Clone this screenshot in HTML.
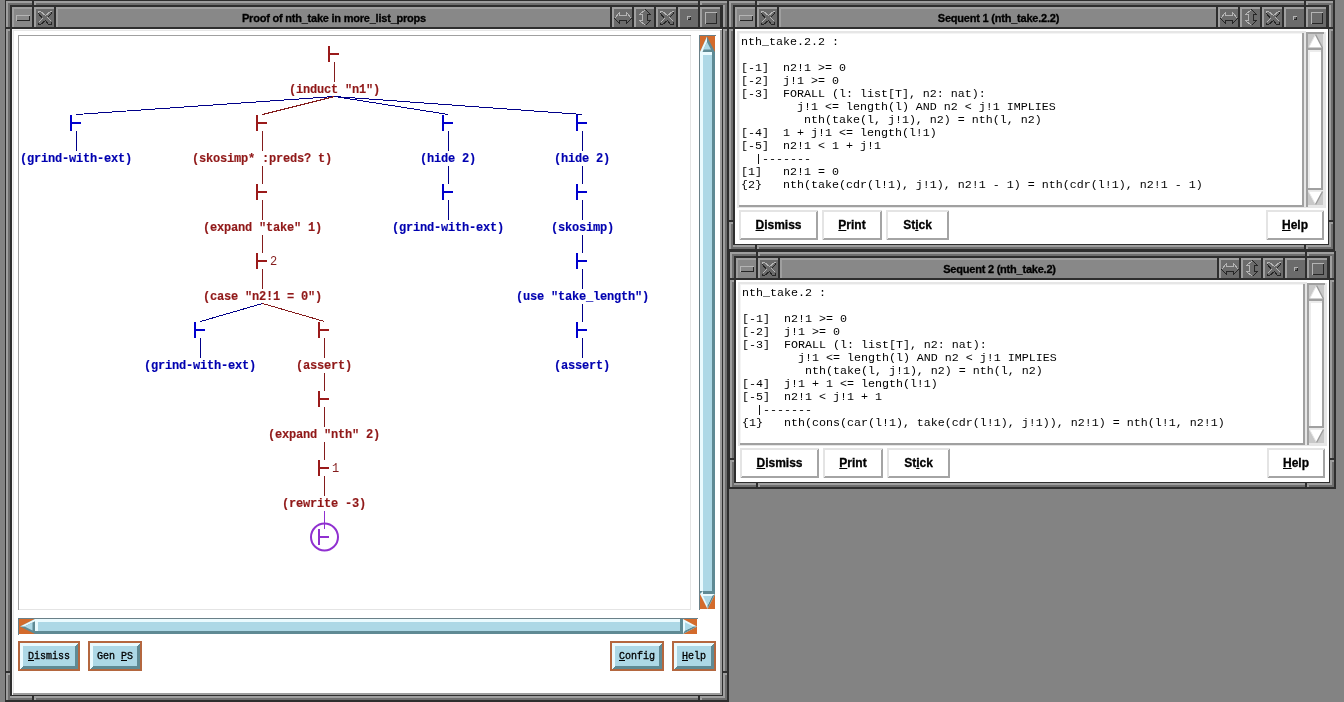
<!DOCTYPE html><html><head><meta charset="utf-8"><style>
*{margin:0;padding:0}
body{width:1344px;height:702px;overflow:hidden;position:relative;background:#838383;-webkit-font-smoothing:antialiased}
.ttl,.lbl,.seq,.lb,.rb,.rl{will-change:transform}
div{position:absolute}
.ttl{font-family:"Liberation Sans",sans-serif;font-weight:bold;font-size:11px;letter-spacing:-0.22px;line-height:20px;text-align:center;color:#000;-webkit-text-stroke:0.3px #000}
.lbl{font-family:"Liberation Mono",monospace;font-weight:bold;font-size:12px;letter-spacing:-0.2px;line-height:14px;white-space:pre;-webkit-text-stroke:0.15px}
.rl{position:absolute;font-family:"Liberation Mono",monospace;font-size:12px;line-height:12px}
.lb{font-family:"Liberation Mono",monospace;font-size:10px;line-height:16px;text-align:center;color:#000;-webkit-text-stroke:0.3px #000}
.rb{font-family:"Liberation Sans",sans-serif;font-weight:bold;font-size:12px;line-height:16px;text-align:center;color:#000;-webkit-text-stroke:0.3px #000}
.seq{font-family:"Liberation Mono",monospace;font-size:11.67px;line-height:13px;white-space:pre;color:#000;}
</style></head><body><div style="left:0px;top:0px;width:1344px;height:702px;background:#838383"></div><div style="left:5px;top:0px;width:724px;height:702px;background:#2e2e2e"></div><div style="left:6px;top:1px;width:721px;height:2px;background:#9f9f9f"></div><div style="left:6px;top:1px;width:2px;height:699px;background:#9f9f9f"></div><div style="left:723px;top:5px;width:2px;height:695px;background:#9f9f9f"></div><div style="left:10px;top:696px;width:717px;height:2px;background:#9f9f9f"></div><div style="left:8px;top:3px;width:719px;height:2px;background:#6e6e6e"></div><div style="left:8px;top:3px;width:2px;height:697px;background:#6e6e6e"></div><div style="left:725px;top:3px;width:2px;height:697px;background:#6e6e6e"></div><div style="left:8px;top:698px;width:719px;height:2px;background:#6e6e6e"></div><div style="left:33px;top:0px;width:1px;height:7px;background:#2e2e2e"></div><div style="left:32px;top:1px;width:1px;height:4px;background:#2e2e2e"></div><div style="left:34px;top:1px;width:2px;height:4px;background:#9f9f9f"></div><div style="left:33px;top:695px;width:1px;height:7px;background:#2e2e2e"></div><div style="left:32px;top:696px;width:1px;height:4px;background:#2e2e2e"></div><div style="left:34px;top:696px;width:2px;height:4px;background:#9f9f9f"></div><div style="left:699px;top:0px;width:1px;height:7px;background:#2e2e2e"></div><div style="left:698px;top:1px;width:1px;height:4px;background:#2e2e2e"></div><div style="left:700px;top:1px;width:2px;height:4px;background:#9f9f9f"></div><div style="left:699px;top:695px;width:1px;height:7px;background:#2e2e2e"></div><div style="left:698px;top:696px;width:1px;height:4px;background:#2e2e2e"></div><div style="left:700px;top:696px;width:2px;height:4px;background:#9f9f9f"></div><div style="left:5px;top:28px;width:7px;height:1px;background:#2e2e2e"></div><div style="left:6px;top:27px;width:4px;height:1px;background:#2e2e2e"></div><div style="left:6px;top:29px;width:4px;height:2px;background:#9f9f9f"></div><div style="left:722px;top:28px;width:7px;height:1px;background:#2e2e2e"></div><div style="left:723px;top:27px;width:4px;height:1px;background:#2e2e2e"></div><div style="left:723px;top:29px;width:4px;height:2px;background:#9f9f9f"></div><div style="left:5px;top:672px;width:7px;height:1px;background:#2e2e2e"></div><div style="left:6px;top:671px;width:4px;height:1px;background:#2e2e2e"></div><div style="left:6px;top:673px;width:4px;height:2px;background:#9f9f9f"></div><div style="left:722px;top:672px;width:7px;height:1px;background:#2e2e2e"></div><div style="left:723px;top:671px;width:4px;height:1px;background:#2e2e2e"></div><div style="left:723px;top:673px;width:4px;height:2px;background:#9f9f9f"></div><div style="left:12px;top:7px;width:22px;height:22px;background:#888888"></div><div style="left:12px;top:7px;width:22px;height:2px;background:#9f9f9f"></div><div style="left:12px;top:7px;width:2px;height:22px;background:#9f9f9f"></div><div style="left:32px;top:7px;width:2px;height:22px;background:#2e2e2e"></div><div style="left:12px;top:27px;width:22px;height:2px;background:#2e2e2e"></div><svg style="position:absolute;left:12px;top:7px;" width="22" height="22" viewBox="0 0 22 22"><g shape-rendering="crispEdges"><path d="M4.5 13.5L4.5 8.5L17.5 8.5" stroke="#b4b4b4" fill="none"/><path d="M4.5 13.5L17.5 13.5L17.5 8.5" stroke="#262626" fill="none"/></g></svg><div style="left:34px;top:7px;width:22px;height:22px;background:#6b6b6b"></div><div style="left:34px;top:7px;width:22px;height:2px;background:#9f9f9f"></div><div style="left:34px;top:7px;width:2px;height:22px;background:#9f9f9f"></div><div style="left:54px;top:7px;width:2px;height:22px;background:#2e2e2e"></div><div style="left:34px;top:27px;width:22px;height:2px;background:#2e2e2e"></div><svg style="position:absolute;left:34px;top:7px;" width="22" height="22" viewBox="0 0 22 22"><g shape-rendering="crispEdges"><path d="M4.5 6.5L4.5 4.5L6.5 4.5L11.5 8.5L16.5 4.5L17.5 4.5" stroke="#b4b4b4" fill="none"/><path d="M13.5 10.5L17.5 14.5" stroke="#b4b4b4" fill="none"/><path d="M4.5 15.5L8.5 11.5" stroke="#b4b4b4" fill="none"/><path d="M17.5 4.5L17.5 6.5L13.5 10.5" stroke="#262626" fill="none"/><path d="M17.5 14.5L17.5 17.5L14.5 17.5L11.5 13.5L6.5 17.5L4.5 17.5L4.5 15.5" stroke="#262626" fill="none"/><path d="M8.5 11.5L4.5 6.5" stroke="#262626" fill="none"/></g></svg><div style="left:56px;top:7px;width:556px;height:22px;background:#888888"></div><div style="left:56px;top:7px;width:556px;height:2px;background:#9f9f9f"></div><div style="left:56px;top:7px;width:2px;height:22px;background:#9f9f9f"></div><div style="left:610px;top:7px;width:2px;height:22px;background:#2e2e2e"></div><div style="left:56px;top:27px;width:556px;height:2px;background:#2e2e2e"></div><div class="ttl" style="left:56px;top:8px;width:556px">Proof of nth_take in more_list_props</div><div style="left:612px;top:7px;width:22px;height:22px;background:#6b6b6b"></div><div style="left:612px;top:7px;width:22px;height:2px;background:#9f9f9f"></div><div style="left:612px;top:7px;width:2px;height:22px;background:#9f9f9f"></div><div style="left:632px;top:7px;width:2px;height:22px;background:#2e2e2e"></div><div style="left:612px;top:27px;width:22px;height:2px;background:#2e2e2e"></div><svg style="position:absolute;left:612px;top:7px;" width="22" height="22" viewBox="0 0 22 22"><g shape-rendering="crispEdges"><path d="M2.5 11.5L7.5 5.5L7.5 8.5L14.5 8.5L14.5 5.5L19.5 11.5" stroke="#b4b4b4" fill="none"/><path d="M19.5 11.5L14.5 16.5L14.5 13.5L7.5 13.5L7.5 16.5L2.5 11.5" stroke="#262626" fill="none"/></g></svg><div style="left:634px;top:7px;width:22px;height:22px;background:#6b6b6b"></div><div style="left:634px;top:7px;width:22px;height:2px;background:#9f9f9f"></div><div style="left:634px;top:7px;width:2px;height:22px;background:#9f9f9f"></div><div style="left:654px;top:7px;width:2px;height:22px;background:#2e2e2e"></div><div style="left:634px;top:27px;width:22px;height:2px;background:#2e2e2e"></div><svg style="position:absolute;left:634px;top:7px;" width="22" height="22" viewBox="0 0 22 22"><g shape-rendering="crispEdges"><path d="M11.5 2.5L5.5 7.5L8.5 7.5L8.5 13.5L5.5 13.5L11.5 18.5" stroke="#b4b4b4" fill="none"/><path d="M11.5 18.5L16.5 13.5L13.5 13.5L13.5 7.5L16.5 7.5L11.5 2.5" stroke="#262626" fill="none"/></g></svg><div style="left:656px;top:7px;width:22px;height:22px;background:#6b6b6b"></div><div style="left:656px;top:7px;width:22px;height:2px;background:#9f9f9f"></div><div style="left:656px;top:7px;width:2px;height:22px;background:#9f9f9f"></div><div style="left:676px;top:7px;width:2px;height:22px;background:#2e2e2e"></div><div style="left:656px;top:27px;width:22px;height:2px;background:#2e2e2e"></div><svg style="position:absolute;left:656px;top:7px;" width="22" height="22" viewBox="0 0 22 22"><g shape-rendering="crispEdges"><path d="M4.5 6.5L4.5 4.5L6.5 4.5L11.5 8.5L16.5 4.5L17.5 4.5" stroke="#b4b4b4" fill="none"/><path d="M13.5 10.5L17.5 14.5" stroke="#b4b4b4" fill="none"/><path d="M4.5 15.5L8.5 11.5" stroke="#b4b4b4" fill="none"/><path d="M17.5 4.5L17.5 6.5L13.5 10.5" stroke="#262626" fill="none"/><path d="M17.5 14.5L17.5 17.5L14.5 17.5L11.5 13.5L6.5 17.5L4.5 17.5L4.5 15.5" stroke="#262626" fill="none"/><path d="M8.5 11.5L4.5 6.5" stroke="#262626" fill="none"/></g></svg><div style="left:678px;top:7px;width:22px;height:22px;background:#6b6b6b"></div><div style="left:678px;top:7px;width:22px;height:2px;background:#9f9f9f"></div><div style="left:678px;top:7px;width:2px;height:22px;background:#9f9f9f"></div><div style="left:698px;top:7px;width:2px;height:22px;background:#2e2e2e"></div><div style="left:678px;top:27px;width:22px;height:2px;background:#2e2e2e"></div><svg style="position:absolute;left:678px;top:7px;" width="22" height="22" viewBox="0 0 22 22"><g shape-rendering="crispEdges"><path d="M9.5 12.5L9.5 9.5L12.5 9.5" stroke="#b4b4b4" fill="none"/><path d="M9.5 12.5L12.5 12.5L12.5 9.5" stroke="#262626" fill="none"/></g></svg><div style="left:700px;top:7px;width:22px;height:22px;background:#6b6b6b"></div><div style="left:700px;top:7px;width:22px;height:2px;background:#9f9f9f"></div><div style="left:700px;top:7px;width:2px;height:22px;background:#9f9f9f"></div><div style="left:720px;top:7px;width:2px;height:22px;background:#2e2e2e"></div><div style="left:700px;top:27px;width:22px;height:2px;background:#2e2e2e"></div><svg style="position:absolute;left:700px;top:7px;" width="22" height="22" viewBox="0 0 22 22"><g shape-rendering="crispEdges"><path d="M5.5 16.5L5.5 5.5L16.5 5.5" stroke="#b4b4b4" fill="none"/><path d="M5.5 16.5L16.5 16.5L16.5 5.5" stroke="#262626" fill="none"/></g></svg><div style="left:12px;top:29px;width:710px;height:666px;background:#ffffff"></div><div style="left:12px;top:29px;width:710px;height:2px;background:#e6e6e6"></div><div style="left:12px;top:29px;width:2px;height:666px;background:#e6e6e6"></div><div style="left:12px;top:29px;width:710px;height:1px;background:#f6f6f6"></div><div style="left:12px;top:29px;width:1px;height:666px;background:#f6f6f6"></div><div style="left:720px;top:30px;width:2px;height:665px;background:#9c9c9c"></div><div style="left:13px;top:693px;width:709px;height:2px;background:#9c9c9c"></div><div style="left:18px;top:35px;width:673px;height:575px;background:#a0a0a0"></div><div style="left:19px;top:36px;width:672px;height:574px;background:#e4e4e4"></div><div style="left:19px;top:36px;width:671px;height:573px;background:#ffffff"></div><div style="left:728px;top:0px;width:607px;height:251px;background:#2e2e2e"></div><div style="left:729px;top:1px;width:604px;height:2px;background:#9f9f9f"></div><div style="left:729px;top:1px;width:2px;height:248px;background:#9f9f9f"></div><div style="left:1329px;top:5px;width:2px;height:244px;background:#9f9f9f"></div><div style="left:733px;top:245px;width:600px;height:2px;background:#9f9f9f"></div><div style="left:731px;top:3px;width:602px;height:2px;background:#6e6e6e"></div><div style="left:731px;top:3px;width:2px;height:246px;background:#6e6e6e"></div><div style="left:1331px;top:3px;width:2px;height:246px;background:#6e6e6e"></div><div style="left:731px;top:247px;width:602px;height:2px;background:#6e6e6e"></div><div style="left:756px;top:0px;width:1px;height:7px;background:#2e2e2e"></div><div style="left:755px;top:1px;width:1px;height:4px;background:#2e2e2e"></div><div style="left:757px;top:1px;width:2px;height:4px;background:#9f9f9f"></div><div style="left:756px;top:244px;width:1px;height:7px;background:#2e2e2e"></div><div style="left:755px;top:245px;width:1px;height:4px;background:#2e2e2e"></div><div style="left:757px;top:245px;width:2px;height:4px;background:#9f9f9f"></div><div style="left:1305px;top:0px;width:1px;height:7px;background:#2e2e2e"></div><div style="left:1304px;top:1px;width:1px;height:4px;background:#2e2e2e"></div><div style="left:1306px;top:1px;width:2px;height:4px;background:#9f9f9f"></div><div style="left:1305px;top:244px;width:1px;height:7px;background:#2e2e2e"></div><div style="left:1304px;top:245px;width:1px;height:4px;background:#2e2e2e"></div><div style="left:1306px;top:245px;width:2px;height:4px;background:#9f9f9f"></div><div style="left:728px;top:28px;width:7px;height:1px;background:#2e2e2e"></div><div style="left:729px;top:27px;width:4px;height:1px;background:#2e2e2e"></div><div style="left:729px;top:29px;width:4px;height:2px;background:#9f9f9f"></div><div style="left:1328px;top:28px;width:7px;height:1px;background:#2e2e2e"></div><div style="left:1329px;top:27px;width:4px;height:1px;background:#2e2e2e"></div><div style="left:1329px;top:29px;width:4px;height:2px;background:#9f9f9f"></div><div style="left:728px;top:221px;width:7px;height:1px;background:#2e2e2e"></div><div style="left:729px;top:220px;width:4px;height:1px;background:#2e2e2e"></div><div style="left:729px;top:222px;width:4px;height:2px;background:#9f9f9f"></div><div style="left:1328px;top:221px;width:7px;height:1px;background:#2e2e2e"></div><div style="left:1329px;top:220px;width:4px;height:1px;background:#2e2e2e"></div><div style="left:1329px;top:222px;width:4px;height:2px;background:#9f9f9f"></div><div style="left:735px;top:7px;width:22px;height:22px;background:#888888"></div><div style="left:735px;top:7px;width:22px;height:2px;background:#9f9f9f"></div><div style="left:735px;top:7px;width:2px;height:22px;background:#9f9f9f"></div><div style="left:755px;top:7px;width:2px;height:22px;background:#2e2e2e"></div><div style="left:735px;top:27px;width:22px;height:2px;background:#2e2e2e"></div><svg style="position:absolute;left:735px;top:7px;" width="22" height="22" viewBox="0 0 22 22"><g shape-rendering="crispEdges"><path d="M4.5 13.5L4.5 8.5L17.5 8.5" stroke="#b4b4b4" fill="none"/><path d="M4.5 13.5L17.5 13.5L17.5 8.5" stroke="#262626" fill="none"/></g></svg><div style="left:757px;top:7px;width:22px;height:22px;background:#6b6b6b"></div><div style="left:757px;top:7px;width:22px;height:2px;background:#9f9f9f"></div><div style="left:757px;top:7px;width:2px;height:22px;background:#9f9f9f"></div><div style="left:777px;top:7px;width:2px;height:22px;background:#2e2e2e"></div><div style="left:757px;top:27px;width:22px;height:2px;background:#2e2e2e"></div><svg style="position:absolute;left:757px;top:7px;" width="22" height="22" viewBox="0 0 22 22"><g shape-rendering="crispEdges"><path d="M4.5 6.5L4.5 4.5L6.5 4.5L11.5 8.5L16.5 4.5L17.5 4.5" stroke="#b4b4b4" fill="none"/><path d="M13.5 10.5L17.5 14.5" stroke="#b4b4b4" fill="none"/><path d="M4.5 15.5L8.5 11.5" stroke="#b4b4b4" fill="none"/><path d="M17.5 4.5L17.5 6.5L13.5 10.5" stroke="#262626" fill="none"/><path d="M17.5 14.5L17.5 17.5L14.5 17.5L11.5 13.5L6.5 17.5L4.5 17.5L4.5 15.5" stroke="#262626" fill="none"/><path d="M8.5 11.5L4.5 6.5" stroke="#262626" fill="none"/></g></svg><div style="left:779px;top:7px;width:439px;height:22px;background:#888888"></div><div style="left:779px;top:7px;width:439px;height:2px;background:#9f9f9f"></div><div style="left:779px;top:7px;width:2px;height:22px;background:#9f9f9f"></div><div style="left:1216px;top:7px;width:2px;height:22px;background:#2e2e2e"></div><div style="left:779px;top:27px;width:439px;height:2px;background:#2e2e2e"></div><div class="ttl" style="left:779px;top:8px;width:439px">Sequent 1 (nth_take.2.2)</div><div style="left:1218px;top:7px;width:22px;height:22px;background:#6b6b6b"></div><div style="left:1218px;top:7px;width:22px;height:2px;background:#9f9f9f"></div><div style="left:1218px;top:7px;width:2px;height:22px;background:#9f9f9f"></div><div style="left:1238px;top:7px;width:2px;height:22px;background:#2e2e2e"></div><div style="left:1218px;top:27px;width:22px;height:2px;background:#2e2e2e"></div><svg style="position:absolute;left:1218px;top:7px;" width="22" height="22" viewBox="0 0 22 22"><g shape-rendering="crispEdges"><path d="M2.5 11.5L7.5 5.5L7.5 8.5L14.5 8.5L14.5 5.5L19.5 11.5" stroke="#b4b4b4" fill="none"/><path d="M19.5 11.5L14.5 16.5L14.5 13.5L7.5 13.5L7.5 16.5L2.5 11.5" stroke="#262626" fill="none"/></g></svg><div style="left:1240px;top:7px;width:22px;height:22px;background:#6b6b6b"></div><div style="left:1240px;top:7px;width:22px;height:2px;background:#9f9f9f"></div><div style="left:1240px;top:7px;width:2px;height:22px;background:#9f9f9f"></div><div style="left:1260px;top:7px;width:2px;height:22px;background:#2e2e2e"></div><div style="left:1240px;top:27px;width:22px;height:2px;background:#2e2e2e"></div><svg style="position:absolute;left:1240px;top:7px;" width="22" height="22" viewBox="0 0 22 22"><g shape-rendering="crispEdges"><path d="M11.5 2.5L5.5 7.5L8.5 7.5L8.5 13.5L5.5 13.5L11.5 18.5" stroke="#b4b4b4" fill="none"/><path d="M11.5 18.5L16.5 13.5L13.5 13.5L13.5 7.5L16.5 7.5L11.5 2.5" stroke="#262626" fill="none"/></g></svg><div style="left:1262px;top:7px;width:22px;height:22px;background:#6b6b6b"></div><div style="left:1262px;top:7px;width:22px;height:2px;background:#9f9f9f"></div><div style="left:1262px;top:7px;width:2px;height:22px;background:#9f9f9f"></div><div style="left:1282px;top:7px;width:2px;height:22px;background:#2e2e2e"></div><div style="left:1262px;top:27px;width:22px;height:2px;background:#2e2e2e"></div><svg style="position:absolute;left:1262px;top:7px;" width="22" height="22" viewBox="0 0 22 22"><g shape-rendering="crispEdges"><path d="M4.5 6.5L4.5 4.5L6.5 4.5L11.5 8.5L16.5 4.5L17.5 4.5" stroke="#b4b4b4" fill="none"/><path d="M13.5 10.5L17.5 14.5" stroke="#b4b4b4" fill="none"/><path d="M4.5 15.5L8.5 11.5" stroke="#b4b4b4" fill="none"/><path d="M17.5 4.5L17.5 6.5L13.5 10.5" stroke="#262626" fill="none"/><path d="M17.5 14.5L17.5 17.5L14.5 17.5L11.5 13.5L6.5 17.5L4.5 17.5L4.5 15.5" stroke="#262626" fill="none"/><path d="M8.5 11.5L4.5 6.5" stroke="#262626" fill="none"/></g></svg><div style="left:1284px;top:7px;width:22px;height:22px;background:#6b6b6b"></div><div style="left:1284px;top:7px;width:22px;height:2px;background:#9f9f9f"></div><div style="left:1284px;top:7px;width:2px;height:22px;background:#9f9f9f"></div><div style="left:1304px;top:7px;width:2px;height:22px;background:#2e2e2e"></div><div style="left:1284px;top:27px;width:22px;height:2px;background:#2e2e2e"></div><svg style="position:absolute;left:1284px;top:7px;" width="22" height="22" viewBox="0 0 22 22"><g shape-rendering="crispEdges"><path d="M9.5 12.5L9.5 9.5L12.5 9.5" stroke="#b4b4b4" fill="none"/><path d="M9.5 12.5L12.5 12.5L12.5 9.5" stroke="#262626" fill="none"/></g></svg><div style="left:1306px;top:7px;width:22px;height:22px;background:#6b6b6b"></div><div style="left:1306px;top:7px;width:22px;height:2px;background:#9f9f9f"></div><div style="left:1306px;top:7px;width:2px;height:22px;background:#9f9f9f"></div><div style="left:1326px;top:7px;width:2px;height:22px;background:#2e2e2e"></div><div style="left:1306px;top:27px;width:22px;height:2px;background:#2e2e2e"></div><svg style="position:absolute;left:1306px;top:7px;" width="22" height="22" viewBox="0 0 22 22"><g shape-rendering="crispEdges"><path d="M5.5 16.5L5.5 5.5L16.5 5.5" stroke="#b4b4b4" fill="none"/><path d="M5.5 16.5L16.5 16.5L16.5 5.5" stroke="#262626" fill="none"/></g></svg><div style="left:735px;top:29px;width:593px;height:215px;background:#ffffff"></div><div style="left:728px;top:251px;width:1px;height:238px;background:#2e2e2e"></div><div style="left:729px;top:251px;width:607px;height:238px;background:#2e2e2e"></div><div style="left:730px;top:252px;width:604px;height:2px;background:#9f9f9f"></div><div style="left:730px;top:252px;width:2px;height:235px;background:#9f9f9f"></div><div style="left:1330px;top:256px;width:2px;height:231px;background:#9f9f9f"></div><div style="left:734px;top:483px;width:600px;height:2px;background:#9f9f9f"></div><div style="left:732px;top:254px;width:602px;height:2px;background:#6e6e6e"></div><div style="left:732px;top:254px;width:2px;height:233px;background:#6e6e6e"></div><div style="left:1332px;top:254px;width:2px;height:233px;background:#6e6e6e"></div><div style="left:732px;top:485px;width:602px;height:2px;background:#6e6e6e"></div><div style="left:757px;top:251px;width:1px;height:7px;background:#2e2e2e"></div><div style="left:756px;top:252px;width:1px;height:4px;background:#2e2e2e"></div><div style="left:758px;top:252px;width:2px;height:4px;background:#9f9f9f"></div><div style="left:757px;top:482px;width:1px;height:7px;background:#2e2e2e"></div><div style="left:756px;top:483px;width:1px;height:4px;background:#2e2e2e"></div><div style="left:758px;top:483px;width:2px;height:4px;background:#9f9f9f"></div><div style="left:1306px;top:251px;width:1px;height:7px;background:#2e2e2e"></div><div style="left:1305px;top:252px;width:1px;height:4px;background:#2e2e2e"></div><div style="left:1307px;top:252px;width:2px;height:4px;background:#9f9f9f"></div><div style="left:1306px;top:482px;width:1px;height:7px;background:#2e2e2e"></div><div style="left:1305px;top:483px;width:1px;height:4px;background:#2e2e2e"></div><div style="left:1307px;top:483px;width:2px;height:4px;background:#9f9f9f"></div><div style="left:729px;top:279px;width:7px;height:1px;background:#2e2e2e"></div><div style="left:730px;top:278px;width:4px;height:1px;background:#2e2e2e"></div><div style="left:730px;top:280px;width:4px;height:2px;background:#9f9f9f"></div><div style="left:1329px;top:279px;width:7px;height:1px;background:#2e2e2e"></div><div style="left:1330px;top:278px;width:4px;height:1px;background:#2e2e2e"></div><div style="left:1330px;top:280px;width:4px;height:2px;background:#9f9f9f"></div><div style="left:729px;top:459px;width:7px;height:1px;background:#2e2e2e"></div><div style="left:730px;top:458px;width:4px;height:1px;background:#2e2e2e"></div><div style="left:730px;top:460px;width:4px;height:2px;background:#9f9f9f"></div><div style="left:1329px;top:459px;width:7px;height:1px;background:#2e2e2e"></div><div style="left:1330px;top:458px;width:4px;height:1px;background:#2e2e2e"></div><div style="left:1330px;top:460px;width:4px;height:2px;background:#9f9f9f"></div><div style="left:736px;top:258px;width:22px;height:22px;background:#888888"></div><div style="left:736px;top:258px;width:22px;height:2px;background:#9f9f9f"></div><div style="left:736px;top:258px;width:2px;height:22px;background:#9f9f9f"></div><div style="left:756px;top:258px;width:2px;height:22px;background:#2e2e2e"></div><div style="left:736px;top:278px;width:22px;height:2px;background:#2e2e2e"></div><svg style="position:absolute;left:736px;top:258px;" width="22" height="22" viewBox="0 0 22 22"><g shape-rendering="crispEdges"><path d="M4.5 13.5L4.5 8.5L17.5 8.5" stroke="#b4b4b4" fill="none"/><path d="M4.5 13.5L17.5 13.5L17.5 8.5" stroke="#262626" fill="none"/></g></svg><div style="left:758px;top:258px;width:22px;height:22px;background:#6b6b6b"></div><div style="left:758px;top:258px;width:22px;height:2px;background:#9f9f9f"></div><div style="left:758px;top:258px;width:2px;height:22px;background:#9f9f9f"></div><div style="left:778px;top:258px;width:2px;height:22px;background:#2e2e2e"></div><div style="left:758px;top:278px;width:22px;height:2px;background:#2e2e2e"></div><svg style="position:absolute;left:758px;top:258px;" width="22" height="22" viewBox="0 0 22 22"><g shape-rendering="crispEdges"><path d="M4.5 6.5L4.5 4.5L6.5 4.5L11.5 8.5L16.5 4.5L17.5 4.5" stroke="#b4b4b4" fill="none"/><path d="M13.5 10.5L17.5 14.5" stroke="#b4b4b4" fill="none"/><path d="M4.5 15.5L8.5 11.5" stroke="#b4b4b4" fill="none"/><path d="M17.5 4.5L17.5 6.5L13.5 10.5" stroke="#262626" fill="none"/><path d="M17.5 14.5L17.5 17.5L14.5 17.5L11.5 13.5L6.5 17.5L4.5 17.5L4.5 15.5" stroke="#262626" fill="none"/><path d="M8.5 11.5L4.5 6.5" stroke="#262626" fill="none"/></g></svg><div style="left:780px;top:258px;width:439px;height:22px;background:#888888"></div><div style="left:780px;top:258px;width:439px;height:2px;background:#9f9f9f"></div><div style="left:780px;top:258px;width:2px;height:22px;background:#9f9f9f"></div><div style="left:1217px;top:258px;width:2px;height:22px;background:#2e2e2e"></div><div style="left:780px;top:278px;width:439px;height:2px;background:#2e2e2e"></div><div class="ttl" style="left:780px;top:259px;width:439px">Sequent 2 (nth_take.2)</div><div style="left:1219px;top:258px;width:22px;height:22px;background:#6b6b6b"></div><div style="left:1219px;top:258px;width:22px;height:2px;background:#9f9f9f"></div><div style="left:1219px;top:258px;width:2px;height:22px;background:#9f9f9f"></div><div style="left:1239px;top:258px;width:2px;height:22px;background:#2e2e2e"></div><div style="left:1219px;top:278px;width:22px;height:2px;background:#2e2e2e"></div><svg style="position:absolute;left:1219px;top:258px;" width="22" height="22" viewBox="0 0 22 22"><g shape-rendering="crispEdges"><path d="M2.5 11.5L7.5 5.5L7.5 8.5L14.5 8.5L14.5 5.5L19.5 11.5" stroke="#b4b4b4" fill="none"/><path d="M19.5 11.5L14.5 16.5L14.5 13.5L7.5 13.5L7.5 16.5L2.5 11.5" stroke="#262626" fill="none"/></g></svg><div style="left:1241px;top:258px;width:22px;height:22px;background:#6b6b6b"></div><div style="left:1241px;top:258px;width:22px;height:2px;background:#9f9f9f"></div><div style="left:1241px;top:258px;width:2px;height:22px;background:#9f9f9f"></div><div style="left:1261px;top:258px;width:2px;height:22px;background:#2e2e2e"></div><div style="left:1241px;top:278px;width:22px;height:2px;background:#2e2e2e"></div><svg style="position:absolute;left:1241px;top:258px;" width="22" height="22" viewBox="0 0 22 22"><g shape-rendering="crispEdges"><path d="M11.5 2.5L5.5 7.5L8.5 7.5L8.5 13.5L5.5 13.5L11.5 18.5" stroke="#b4b4b4" fill="none"/><path d="M11.5 18.5L16.5 13.5L13.5 13.5L13.5 7.5L16.5 7.5L11.5 2.5" stroke="#262626" fill="none"/></g></svg><div style="left:1263px;top:258px;width:22px;height:22px;background:#6b6b6b"></div><div style="left:1263px;top:258px;width:22px;height:2px;background:#9f9f9f"></div><div style="left:1263px;top:258px;width:2px;height:22px;background:#9f9f9f"></div><div style="left:1283px;top:258px;width:2px;height:22px;background:#2e2e2e"></div><div style="left:1263px;top:278px;width:22px;height:2px;background:#2e2e2e"></div><svg style="position:absolute;left:1263px;top:258px;" width="22" height="22" viewBox="0 0 22 22"><g shape-rendering="crispEdges"><path d="M4.5 6.5L4.5 4.5L6.5 4.5L11.5 8.5L16.5 4.5L17.5 4.5" stroke="#b4b4b4" fill="none"/><path d="M13.5 10.5L17.5 14.5" stroke="#b4b4b4" fill="none"/><path d="M4.5 15.5L8.5 11.5" stroke="#b4b4b4" fill="none"/><path d="M17.5 4.5L17.5 6.5L13.5 10.5" stroke="#262626" fill="none"/><path d="M17.5 14.5L17.5 17.5L14.5 17.5L11.5 13.5L6.5 17.5L4.5 17.5L4.5 15.5" stroke="#262626" fill="none"/><path d="M8.5 11.5L4.5 6.5" stroke="#262626" fill="none"/></g></svg><div style="left:1285px;top:258px;width:22px;height:22px;background:#6b6b6b"></div><div style="left:1285px;top:258px;width:22px;height:2px;background:#9f9f9f"></div><div style="left:1285px;top:258px;width:2px;height:22px;background:#9f9f9f"></div><div style="left:1305px;top:258px;width:2px;height:22px;background:#2e2e2e"></div><div style="left:1285px;top:278px;width:22px;height:2px;background:#2e2e2e"></div><svg style="position:absolute;left:1285px;top:258px;" width="22" height="22" viewBox="0 0 22 22"><g shape-rendering="crispEdges"><path d="M9.5 12.5L9.5 9.5L12.5 9.5" stroke="#b4b4b4" fill="none"/><path d="M9.5 12.5L12.5 12.5L12.5 9.5" stroke="#262626" fill="none"/></g></svg><div style="left:1307px;top:258px;width:22px;height:22px;background:#6b6b6b"></div><div style="left:1307px;top:258px;width:22px;height:2px;background:#9f9f9f"></div><div style="left:1307px;top:258px;width:2px;height:22px;background:#9f9f9f"></div><div style="left:1327px;top:258px;width:2px;height:22px;background:#2e2e2e"></div><div style="left:1307px;top:278px;width:22px;height:2px;background:#2e2e2e"></div><svg style="position:absolute;left:1307px;top:258px;" width="22" height="22" viewBox="0 0 22 22"><g shape-rendering="crispEdges"><path d="M5.5 16.5L5.5 5.5L16.5 5.5" stroke="#b4b4b4" fill="none"/><path d="M5.5 16.5L16.5 16.5L16.5 5.5" stroke="#262626" fill="none"/></g></svg><div style="left:736px;top:280px;width:593px;height:202px;background:#ffffff"></div><div style="left:328px;top:46px;width:2px;height:16px;background:#9a1a1a"></div><div style="left:330px;top:53px;width:9px;height:2px;background:#9a1a1a"></div><div style="left:334px;top:62px;width:1px;height:20px;background:#841c1c"></div><div class="lbl" style="left:289px;top:83px;color:#901818">(induct "n1")</div><div style="left:70px;top:115px;width:2px;height:16px;background:#0000cd"></div><div style="left:72px;top:122px;width:9px;height:2px;background:#0000cd"></div><div style="left:76px;top:131px;width:1px;height:20px;background:#000088"></div><div class="lbl" style="left:20px;top:152px;color:#0000b0">(grind-with-ext)</div><div style="left:256px;top:115px;width:2px;height:16px;background:#9a1a1a"></div><div style="left:258px;top:122px;width:9px;height:2px;background:#9a1a1a"></div><div style="left:262px;top:131px;width:1px;height:20px;background:#841c1c"></div><div class="lbl" style="left:192px;top:152px;color:#901818">(skosimp* :preds? t)</div><div style="left:442px;top:115px;width:2px;height:16px;background:#0000cd"></div><div style="left:444px;top:122px;width:9px;height:2px;background:#0000cd"></div><div style="left:448px;top:131px;width:1px;height:20px;background:#000088"></div><div class="lbl" style="left:420px;top:152px;color:#0000b0">(hide 2)</div><div style="left:576px;top:115px;width:2px;height:16px;background:#0000cd"></div><div style="left:578px;top:122px;width:9px;height:2px;background:#0000cd"></div><div style="left:582px;top:131px;width:1px;height:20px;background:#000088"></div><div class="lbl" style="left:554px;top:152px;color:#0000b0">(hide 2)</div><div style="left:256px;top:184px;width:2px;height:16px;background:#9a1a1a"></div><div style="left:258px;top:191px;width:9px;height:2px;background:#9a1a1a"></div><div style="left:262px;top:200px;width:1px;height:20px;background:#841c1c"></div><div class="lbl" style="left:203px;top:221px;color:#901818">(expand "take" 1)</div><div style="left:442px;top:184px;width:2px;height:16px;background:#0000cd"></div><div style="left:444px;top:191px;width:9px;height:2px;background:#0000cd"></div><div style="left:448px;top:200px;width:1px;height:20px;background:#000088"></div><div class="lbl" style="left:392px;top:221px;color:#0000b0">(grind-with-ext)</div><div style="left:576px;top:184px;width:2px;height:16px;background:#0000cd"></div><div style="left:578px;top:191px;width:9px;height:2px;background:#0000cd"></div><div style="left:582px;top:200px;width:1px;height:20px;background:#000088"></div><div class="lbl" style="left:551px;top:221px;color:#0000b0">(skosimp)</div><div style="left:256px;top:253px;width:2px;height:16px;background:#9a1a1a"></div><div style="left:258px;top:260px;width:9px;height:2px;background:#9a1a1a"></div><div class="rl" style="left:270px;top:256px;color:#841c1c">2</div><div style="left:262px;top:269px;width:1px;height:20px;background:#841c1c"></div><div class="lbl" style="left:203px;top:290px;color:#901818">(case "n2!1 = 0")</div><div style="left:576px;top:253px;width:2px;height:16px;background:#0000cd"></div><div style="left:578px;top:260px;width:9px;height:2px;background:#0000cd"></div><div style="left:582px;top:269px;width:1px;height:20px;background:#000088"></div><div class="lbl" style="left:516px;top:290px;color:#0000b0">(use "take_length")</div><div style="left:194px;top:322px;width:2px;height:16px;background:#0000cd"></div><div style="left:196px;top:329px;width:9px;height:2px;background:#0000cd"></div><div style="left:200px;top:338px;width:1px;height:20px;background:#000088"></div><div class="lbl" style="left:144px;top:359px;color:#0000b0">(grind-with-ext)</div><div style="left:318px;top:322px;width:2px;height:16px;background:#9a1a1a"></div><div style="left:320px;top:329px;width:9px;height:2px;background:#9a1a1a"></div><div style="left:324px;top:338px;width:1px;height:20px;background:#841c1c"></div><div class="lbl" style="left:296px;top:359px;color:#901818">(assert)</div><div style="left:576px;top:322px;width:2px;height:16px;background:#0000cd"></div><div style="left:578px;top:329px;width:9px;height:2px;background:#0000cd"></div><div style="left:582px;top:338px;width:1px;height:20px;background:#000088"></div><div class="lbl" style="left:554px;top:359px;color:#0000b0">(assert)</div><div style="left:318px;top:391px;width:2px;height:16px;background:#9a1a1a"></div><div style="left:320px;top:398px;width:9px;height:2px;background:#9a1a1a"></div><div style="left:324px;top:407px;width:1px;height:20px;background:#841c1c"></div><div class="lbl" style="left:268px;top:428px;color:#901818">(expand "nth" 2)</div><div style="left:318px;top:460px;width:2px;height:16px;background:#9a1a1a"></div><div style="left:320px;top:467px;width:9px;height:2px;background:#9a1a1a"></div><div class="rl" style="left:332px;top:463px;color:#841c1c">1</div><div style="left:324px;top:476px;width:1px;height:20px;background:#841c1c"></div><div class="lbl" style="left:282px;top:497px;color:#901818">(rewrite -3)</div><svg style="position:absolute;left:308px;top:521px" width="32" height="32"><circle cx="16.5" cy="16" r="13.5" stroke="#9030d0" stroke-width="2" fill="none"/></svg><div style="left:318px;top:529px;width:2px;height:16px;background:#9030d0"></div><div style="left:320px;top:536px;width:9px;height:2px;background:#9030d0"></div><svg style="position:absolute;left:0;top:0" width="720" height="620" shape-rendering="crispEdges"><line x1="334.5" y1="96.5" x2="76.5" y2="114.5" stroke="#000088" stroke-width="1"/><line x1="334.5" y1="96.5" x2="262.5" y2="114.5" stroke="#841c1c" stroke-width="1"/><line x1="334.5" y1="96.5" x2="448.5" y2="114.5" stroke="#000088" stroke-width="1"/><line x1="334.5" y1="96.5" x2="582.5" y2="114.5" stroke="#000088" stroke-width="1"/><line x1="262.5" y1="165.5" x2="262.5" y2="183.5" stroke="#841c1c" stroke-width="1"/><line x1="448.5" y1="165.5" x2="448.5" y2="183.5" stroke="#000088" stroke-width="1"/><line x1="582.5" y1="165.5" x2="582.5" y2="183.5" stroke="#000088" stroke-width="1"/><line x1="262.5" y1="234.5" x2="262.5" y2="252.5" stroke="#841c1c" stroke-width="1"/><line x1="582.5" y1="234.5" x2="582.5" y2="252.5" stroke="#000088" stroke-width="1"/><line x1="262.5" y1="303.5" x2="200.5" y2="321.5" stroke="#000088" stroke-width="1"/><line x1="262.5" y1="303.5" x2="324.5" y2="321.5" stroke="#841c1c" stroke-width="1"/><line x1="582.5" y1="303.5" x2="582.5" y2="321.5" stroke="#000088" stroke-width="1"/><line x1="324.5" y1="372.5" x2="324.5" y2="390.5" stroke="#841c1c" stroke-width="1"/><line x1="324.5" y1="441.5" x2="324.5" y2="459.5" stroke="#841c1c" stroke-width="1"/><line x1="324.5" y1="510.5" x2="324.5" y2="528.5" stroke="#9030d0" stroke-width="1"/></svg><div style="left:699px;top:35px;width:17px;height:1px;background:#6a8088"></div><div style="left:699px;top:35px;width:1px;height:575px;background:#6a8088"></div><div style="left:700px;top:36px;width:15px;height:573px;background:#add8e6"></div><svg style="position:absolute;left:700px;top:36px;" width="15" height="16" viewBox="0 0 15 16"><rect width="15" height="16" fill="#d36b2c"/><path d="M7 0.5L15 16H0Z" fill="#5f8a94"/><path d="M7 0.5L0 16H2.5L7 6Z" fill="#eafafe"/><path d="M7 6L11 13.5H3.2Z" fill="#add8e6"/></svg><div style="left:700px;top:52px;width:15px;height:542px;background:#5f8a94"></div><div style="left:700px;top:52px;width:12px;height:539px;background:#eafafe"></div><div style="left:703px;top:55px;width:9px;height:536px;background:#add8e6"></div><svg style="position:absolute;left:700px;top:591px;" width="15" height="3" viewBox="0 0 15 3"><path d="M0 3L3 0V3Z" fill="#eafafe"/></svg><svg style="position:absolute;left:712px;top:52px;" width="3" height="3" viewBox="0 0 3 3"><path d="M3 0L0 3H3Z" fill="#5f8a94"/></svg><svg style="position:absolute;left:700px;top:594px;" width="15" height="15" viewBox="0 0 15 15"><rect width="15" height="15" fill="#d36b2c"/><path d="M0 0H15L7.5 15Z" fill="#eafafe"/><path d="M15 0L7.5 15L7.5 11.5L12.2 2Z" fill="#5f8a94"/><path d="M3 2H12.2L7.5 11.5Z" fill="#add8e6"/></svg><div style="left:18px;top:618px;width:680px;height:1px;background:#6a8088"></div><div style="left:18px;top:618px;width:1px;height:17px;background:#6a8088"></div><div style="left:19px;top:619px;width:678px;height:15px;background:#add8e6"></div><svg style="position:absolute;left:19px;top:619px;" width="16" height="15" viewBox="0 0 16 15"><rect width="16" height="15" fill="#d36b2c"/><path d="M1 7.5L16 0V15Z" fill="#5f8a94"/><path d="M1 7.5L16 0V2.3L5.5 7.5Z" fill="#eafafe"/><path d="M5.5 7.5L13.5 3.5V11.5Z" fill="#add8e6"/></svg><div style="left:35px;top:619px;width:648px;height:15px;background:#5f8a94"></div><div style="left:35px;top:619px;width:645px;height:12px;background:#eafafe"></div><div style="left:38px;top:622px;width:642px;height:9px;background:#add8e6"></div><svg style="position:absolute;left:683px;top:619px;" width="14" height="15" viewBox="0 0 14 15"><rect width="14" height="15" fill="#d36b2c"/><path d="M0 0L14 7.5L0 15Z" fill="#eafafe"/><path d="M14 7.5L0 15L2 11.5L10.5 7.5Z" fill="#5f8a94"/><path d="M2 3.2L10.5 7.5L2 11.5Z" fill="#add8e6"/></svg><div style="left:18px;top:641px;width:62px;height:30px;background:#b4673f"></div><svg style="position:absolute;left:20px;top:643px;shape-rendering:crispEdges" width="58" height="26" viewBox="0 0 58 26"><rect width="58" height="26" fill="#add8e6"/><path d="M0 0H58L55 3H3V23L0 26Z" fill="#eafafe"/><path d="M58 0V26H0L3 23H55V3Z" fill="#5f8a94"/></svg><div class="lb" style="left:18px;top:649px;width:62px"><u>D</u>ismiss</div><div style="left:88px;top:641px;width:54px;height:30px;background:#b4673f"></div><svg style="position:absolute;left:90px;top:643px;shape-rendering:crispEdges" width="50" height="26" viewBox="0 0 50 26"><rect width="50" height="26" fill="#add8e6"/><path d="M0 0H50L47 3H3V23L0 26Z" fill="#eafafe"/><path d="M50 0V26H0L3 23H47V3Z" fill="#5f8a94"/></svg><div class="lb" style="left:88px;top:649px;width:54px">Gen <u>P</u>S</div><div style="left:610px;top:641px;width:54px;height:30px;background:#b4673f"></div><svg style="position:absolute;left:612px;top:643px;shape-rendering:crispEdges" width="50" height="26" viewBox="0 0 50 26"><rect width="50" height="26" fill="#add8e6"/><path d="M0 0H50L47 3H3V23L0 26Z" fill="#eafafe"/><path d="M50 0V26H0L3 23H47V3Z" fill="#5f8a94"/></svg><div class="lb" style="left:610px;top:649px;width:54px"><u>C</u>onfig</div><div style="left:672px;top:641px;width:44px;height:30px;background:#b4673f"></div><svg style="position:absolute;left:674px;top:643px;shape-rendering:crispEdges" width="40" height="26" viewBox="0 0 40 26"><rect width="40" height="26" fill="#add8e6"/><path d="M0 0H40L37 3H3V23L0 26Z" fill="#eafafe"/><path d="M40 0V26H0L3 23H37V3Z" fill="#5f8a94"/></svg><div class="lb" style="left:672px;top:649px;width:44px"><u>H</u>elp</div><div style="left:737px;top:31px;width:569px;height:177px;background:#e6e6e6"></div><div style="left:739px;top:33px;width:565px;height:174px;background:#a0a0a0"></div><div style="left:739px;top:33px;width:563px;height:172px;background:#f4f4f4"></div><div style="left:740px;top:34px;width:562px;height:171px;background:#ffffff"></div><div class="seq" style="left:741px;top:36px">nth_take.2.2 :

[-1]  n2!1 &gt;= 0
[-2]  j!1 &gt;= 0
[-3]  FORALL (l: list[T], n2: nat):
        j!1 &lt;= length(l) AND n2 &lt; j!1 IMPLIES
         nth(take(l, j!1), n2) = nth(l, n2)
[-4]  1 + j!1 &lt;= length(l!1)
[-5]  n2!1 &lt; 1 + j!1
  |-------
[1]   n2!1 = 0
{2}   nth(take(cdr(l!1), j!1), n2!1 - 1) = nth(cdr(l!1), n2!1 - 1)</div><div style="left:1306px;top:32px;width:20px;height:176px;background:#e6e6e6"></div><div style="left:1306px;top:32px;width:2px;height:175px;background:#a0a0a0"></div><div style="left:1306px;top:32px;width:18px;height:2px;background:#a0a0a0"></div><svg style="position:absolute;left:1308px;top:34px;" width="15" height="16" viewBox="0 0 15 16"><rect width="15" height="16" fill="#c8c8c8"/><path d="M7.5 0.5L14.5 14H0.5Z" fill="#ffffff"/><path d="M7.5 0.5L0.5 14" stroke="#e6e6e6" stroke-width="1"/><path d="M7.5 0.5L14.5 14" stroke="#9a9a9a" stroke-width="1.4"/><rect y="13.5" width="15" height="2.5" fill="#a0a0a0"/></svg><div style="left:1308px;top:50px;width:15px;height:140px;background:#ffffff"></div><div style="left:1308px;top:50px;width:15px;height:2px;background:#ececec"></div><div style="left:1308px;top:50px;width:2px;height:140px;background:#ececec"></div><div style="left:1321px;top:50px;width:2px;height:140px;background:#a0a0a0"></div><div style="left:1308px;top:188px;width:15px;height:2px;background:#a0a0a0"></div><svg style="position:absolute;left:1308px;top:190px;" width="15" height="15" viewBox="0 0 15 15"><rect width="15" height="15" fill="#c8c8c8"/><rect width="15" height="1.5" fill="#e8e8e8"/><path d="M0.5 1.5H14.5L7.5 14.5Z" fill="#ffffff"/><path d="M0.5 1.5L7.5 14.5" stroke="#e6e6e6" stroke-width="1"/><path d="M14.5 1.5L7.5 14.5" stroke="#9a9a9a" stroke-width="1.4"/></svg><div style="left:738px;top:282px;width:569px;height:164px;background:#e6e6e6"></div><div style="left:740px;top:284px;width:565px;height:161px;background:#a0a0a0"></div><div style="left:740px;top:284px;width:563px;height:159px;background:#f4f4f4"></div><div style="left:741px;top:285px;width:562px;height:158px;background:#ffffff"></div><div class="seq" style="left:742px;top:287px">nth_take.2 :

[-1]  n2!1 &gt;= 0
[-2]  j!1 &gt;= 0
[-3]  FORALL (l: list[T], n2: nat):
        j!1 &lt;= length(l) AND n2 &lt; j!1 IMPLIES
         nth(take(l, j!1), n2) = nth(l, n2)
[-4]  j!1 + 1 &lt;= length(l!1)
[-5]  n2!1 &lt; j!1 + 1
  |-------
{1}   nth(cons(car(l!1), take(cdr(l!1), j!1)), n2!1) = nth(l!1, n2!1)</div><div style="left:1307px;top:283px;width:20px;height:163px;background:#e6e6e6"></div><div style="left:1307px;top:283px;width:2px;height:162px;background:#a0a0a0"></div><div style="left:1307px;top:283px;width:18px;height:2px;background:#a0a0a0"></div><svg style="position:absolute;left:1309px;top:285px;" width="15" height="16" viewBox="0 0 15 16"><rect width="15" height="16" fill="#c8c8c8"/><path d="M7.5 0.5L14.5 14H0.5Z" fill="#ffffff"/><path d="M7.5 0.5L0.5 14" stroke="#e6e6e6" stroke-width="1"/><path d="M7.5 0.5L14.5 14" stroke="#9a9a9a" stroke-width="1.4"/><rect y="13.5" width="15" height="2.5" fill="#a0a0a0"/></svg><div style="left:1309px;top:301px;width:15px;height:127px;background:#ffffff"></div><div style="left:1309px;top:301px;width:15px;height:2px;background:#ececec"></div><div style="left:1309px;top:301px;width:2px;height:127px;background:#ececec"></div><div style="left:1322px;top:301px;width:2px;height:127px;background:#a0a0a0"></div><div style="left:1309px;top:426px;width:15px;height:2px;background:#a0a0a0"></div><svg style="position:absolute;left:1309px;top:428px;" width="15" height="15" viewBox="0 0 15 15"><rect width="15" height="15" fill="#c8c8c8"/><rect width="15" height="1.5" fill="#e8e8e8"/><path d="M0.5 1.5H14.5L7.5 14.5Z" fill="#ffffff"/><path d="M0.5 1.5L7.5 14.5" stroke="#e6e6e6" stroke-width="1"/><path d="M14.5 1.5L7.5 14.5" stroke="#9a9a9a" stroke-width="1.4"/></svg><svg style="position:absolute;left:739px;top:210px;shape-rendering:crispEdges" width="79" height="30" viewBox="0 0 79 30"><rect width="79" height="30" fill="#ffffff"/><path d="M0 0H79L77 2H2V28L0 30Z" fill="#e4e4e4"/><path d="M79 0V30H0L2 28H77V2Z" fill="#a4a4a4"/></svg><div class="rb" style="left:739px;top:217px;width:79px"><u>D</u>ismiss</div><svg style="position:absolute;left:822px;top:210px;shape-rendering:crispEdges" width="60" height="30" viewBox="0 0 60 30"><rect width="60" height="30" fill="#ffffff"/><path d="M0 0H60L58 2H2V28L0 30Z" fill="#e4e4e4"/><path d="M60 0V30H0L2 28H58V2Z" fill="#a4a4a4"/></svg><div class="rb" style="left:822px;top:217px;width:60px"><u>P</u>rint</div><svg style="position:absolute;left:886px;top:210px;shape-rendering:crispEdges" width="63" height="30" viewBox="0 0 63 30"><rect width="63" height="30" fill="#ffffff"/><path d="M0 0H63L61 2H2V28L0 30Z" fill="#e4e4e4"/><path d="M63 0V30H0L2 28H61V2Z" fill="#a4a4a4"/></svg><div class="rb" style="left:886px;top:217px;width:63px">St<u>i</u>ck</div><svg style="position:absolute;left:1266px;top:210px;shape-rendering:crispEdges" width="58" height="30" viewBox="0 0 58 30"><rect width="58" height="30" fill="#ffffff"/><path d="M0 0H58L56 2H2V28L0 30Z" fill="#e4e4e4"/><path d="M58 0V30H0L2 28H56V2Z" fill="#a4a4a4"/></svg><div class="rb" style="left:1266px;top:217px;width:58px"><u>H</u>elp</div><svg style="position:absolute;left:740px;top:448px;shape-rendering:crispEdges" width="79" height="30" viewBox="0 0 79 30"><rect width="79" height="30" fill="#ffffff"/><path d="M0 0H79L77 2H2V28L0 30Z" fill="#e4e4e4"/><path d="M79 0V30H0L2 28H77V2Z" fill="#a4a4a4"/></svg><div class="rb" style="left:740px;top:455px;width:79px"><u>D</u>ismiss</div><svg style="position:absolute;left:823px;top:448px;shape-rendering:crispEdges" width="60" height="30" viewBox="0 0 60 30"><rect width="60" height="30" fill="#ffffff"/><path d="M0 0H60L58 2H2V28L0 30Z" fill="#e4e4e4"/><path d="M60 0V30H0L2 28H58V2Z" fill="#a4a4a4"/></svg><div class="rb" style="left:823px;top:455px;width:60px"><u>P</u>rint</div><svg style="position:absolute;left:887px;top:448px;shape-rendering:crispEdges" width="63" height="30" viewBox="0 0 63 30"><rect width="63" height="30" fill="#ffffff"/><path d="M0 0H63L61 2H2V28L0 30Z" fill="#e4e4e4"/><path d="M63 0V30H0L2 28H61V2Z" fill="#a4a4a4"/></svg><div class="rb" style="left:887px;top:455px;width:63px">St<u>i</u>ck</div><svg style="position:absolute;left:1267px;top:448px;shape-rendering:crispEdges" width="58" height="30" viewBox="0 0 58 30"><rect width="58" height="30" fill="#ffffff"/><path d="M0 0H58L56 2H2V28L0 30Z" fill="#e4e4e4"/><path d="M58 0V30H0L2 28H56V2Z" fill="#a4a4a4"/></svg><div class="rb" style="left:1267px;top:455px;width:58px"><u>H</u>elp</div></body></html>
